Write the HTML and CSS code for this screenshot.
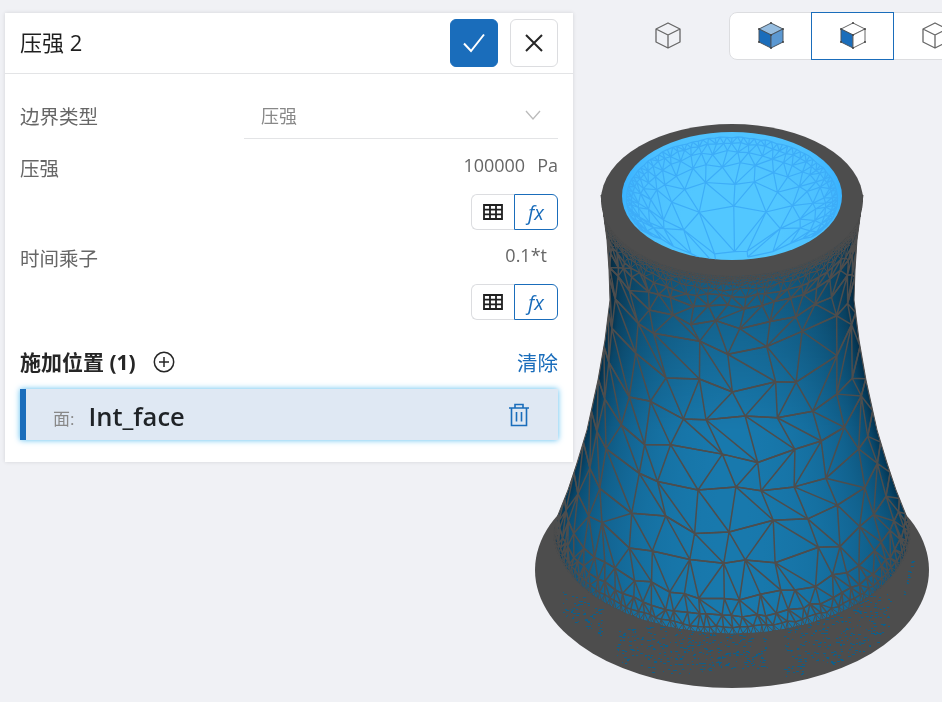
FILE: index.html
```html
<!DOCTYPE html>
<html lang="zh-CN">
<head>
    <meta charset="UTF-8">
    <meta name="viewport" content="width=device-width, initial-scale=1.0">
    <title>压强 2</title>
    <link rel="stylesheet" href="styles.css">
</head>
<body>
    <div class="stage">
        <canvas id="viewport" class="viewport" width="942" height="702"></canvas>

        <div class="view-tools">
            <svg class="cube cube-solo" viewBox="0 0 26 28"><path d="M13 1 25 7V20L13 26 1 20V7ZM1 7 13 13 25 7M13 13V26"/></svg>
            <div class="view-group">
                <button class="view-btn"><svg class="cube cube-dark" viewBox="0 0 26 28"><path class="f-top" d="M13 1 25 7 13 13 1 7Z"/><path class="f-left" d="M1 7 13 13V26L1 20Z"/><path class="f-right" d="M25 7 13 13V26L25 20Z"/><path class="dots" d="M13 1h.01M25 7h.01M25 20h.01M13 26h.01M1 20h.01M1 7h.01M13 13h.01"/></svg></button>
                <button class="view-btn active"><svg class="cube cube-dark" viewBox="0 0 26 28"><path class="f-none" d="M13 1 25 7 13 13 1 7Z"/><path class="f-left" d="M1 7 13 13V26L1 20Z"/><path class="f-none" d="M25 7 13 13V26L25 20Z"/><path class="dots" d="M13 1h.01M25 7h.01M25 20h.01M13 26h.01M1 20h.01M1 7h.01M13 13h.01"/></svg></button>
                <button class="view-btn"><svg class="cube" viewBox="0 0 26 28"><path d="M13 1 25 7V20L13 26 1 20V7ZM1 7 13 13 25 7M13 13V26"/></svg></button>
            </div>
        </div>

        <div class="panel">
            <div class="panel-head">
                <span class="panel-title">压强 2</span>
                <button class="square-btn primary"><svg viewBox="0 0 24 24" width="24" height="24"><path d="M2 12.5 9 20 22 3.500"/></svg></button>
                <button class="square-btn"><svg viewBox="0 0 24 24" width="24" height="24"><path d="M4 4 20 20M20 4 4 20"/></svg></button>
            </div>
            <div class="panel-body">
                <div class="select-row">
                    <label class="field-label">边界类型</label>
                    <div class="select">
                        <span class="select-text">压强</span>
                        <svg viewBox="0 0 16 10" width="16" height="10"><path d="M1 1 8 9 15 1"/></svg>
                    </div>
                </div>

                <div class="field">
                    <label class="field-label">压强</label>
                    <div class="field-value">100000<span class="unit">Pa</span></div>
                </div>
                <div class="toggle-row">
                    <div class="toggle">
                        <button class="toggle-btn"><svg viewBox="0 0 20 16" width="20" height="16"><path d="M1 1H19V15H1ZM1 5.700H19M1 10.300H19M7 1V15M13 1V15"/></svg></button>
                        <button class="toggle-btn on">fx</button>
                    </div>
                </div>

                <div class="field field-next">
                    <label class="field-label">时间乘子</label>
                    <div class="field-value short">0.1*t</div>
                </div>
                <div class="toggle-row">
                    <div class="toggle">
                        <button class="toggle-btn"><svg viewBox="0 0 20 16" width="20" height="16"><path d="M1 1H19V15H1ZM1 5.700H19M1 10.300H19M7 1V15M13 1V15"/></svg></button>
                        <button class="toggle-btn on">fx</button>
                    </div>
                </div>

                <div class="section-head">
                    <span class="section-title">施加位置 (1)</span>
                    <svg class="add-icon" viewBox="0 0 22 22" width="22" height="22"><circle cx="11" cy="11" r="9.700"/><path d="M11 6V16M6 11H16"/></svg>
                    <a class="clear-link">清除</a>
                </div>
                <div class="pick-item">
                    <span class="pick-type">面:</span>
                    <span class="pick-name">Int_face</span>
                    <svg class="trash-icon" viewBox="0 0 22 24" width="22" height="24"><path d="M1 5H21M7 5V1.500H15V5M3.500 5V22.500H18.500V5M8.500 9V18.500M13.500 9V18.500"/></svg>
                </div>
            </div>
        </div>
    </div>
    <script src="mesh.js"></script>
</body>
</html>
```

FILE: styles.css
```css
body {
    margin: 0;
    overflow: hidden;
    font-family: "Open Sans", "Noto Sans CJK SC", sans-serif;
    color: #333;
}

button {
    font-family: inherit;
    padding: 0;
    cursor: pointer;
}

.stage {
    position: relative;
    width: 942px;
    height: 702px;
    overflow: hidden;
    background-color: #f0f1f5;
    padding: 13px 0 0 5px;
    box-sizing: border-box;
}

/* 3D view sits behind everything */
.viewport {
    position: absolute;
    top: 0;
    left: 0;
}

/* Tools float over the 3D view */
.view-tools {
    position: absolute;
    top: 12px;
    left: 655px;
    display: flex;
    align-items: center;
    width: 340px;
}

.cube {
    width: 26px;
    height: 28px;
    display: block;
}

.cube path {
    fill: none;
    stroke: #666;
    stroke-width: 1.3;
    stroke-linejoin: round;
}

.cube-solo {
    margin-right: 48px;
}

.cube-dark path {
    stroke: #4a5560;
    stroke-width: 1;
}

.cube-dark .f-top { fill: #96bde0; }
.cube-dark .f-left { fill: #1a6dbb; }
.cube-dark .f-right { fill: #5b98d2; }
.cube-dark .f-none { fill: #fff; stroke: #666; }

.cube-dark .dots {
    stroke: #444;
    stroke-width: 2;
    stroke-linecap: round;
}

.view-group {
    display: flex;
    height: 48px;
    background-color: #fff;
    border: 1px solid #dcdde0;
    border-radius: 8px;
    box-sizing: border-box;
}

.view-btn {
    width: 81px;
    height: 46px;
    border: none;
    background: none;
    display: flex;
    align-items: center;
    justify-content: center;
}

.view-btn.active {
    height: 48px;
    width: 83px;
    margin: -1px 0;
    border: 1px solid #1a6dbb;
}

.panel {
    position: relative;
    width: 568px;
    background-color: #fff;
    box-shadow: 0 0 4px rgba(0, 0, 0, 0.12);
}

.panel-head {
    display: flex;
    align-items: center;
    gap: 12px;
    height: 60px;
    padding: 0 15px;
    border-bottom: 1px solid #e3e4e6;
}

.panel-title {
    flex: 1;
    font-size: 22px;
    color: #1f1f1f;
    margin-bottom: 4px;
}

.square-btn {
    width: 48px;
    height: 48px;
    background-color: #fff;
    border: 1px solid #dcdde0;
    border-radius: 6px;
    display: flex;
    align-items: center;
    justify-content: center;
}

.square-btn path {
    fill: none;
    stroke: #262626;
    stroke-width: 2;
}

.square-btn.primary {
    background-color: #1a6dbb;
    border-color: #1a6dbb;
}

.square-btn.primary path {
    stroke: #fff;
}

.panel-body {
    padding: 21px 15px 22px;
}

.field-label {
    font-size: 19.500px;
    line-height: 36px;
    color: #666;
}

.select-row {
    display: flex;
    height: 44px;
}

.select-row .field-label {
    width: 224px;
    line-height: 44px;
}

.select {
    flex: 1;
    display: flex;
    align-items: center;
    justify-content: space-between;
    padding: 0 17px 3px;
    border-bottom: 1px solid #e3e4e6;
    font-size: 18px;
    color: #888;
}

.select-text {
    margin-bottom: 1px;
}

.select svg path {
    fill: none;
    stroke: #bbb;
    stroke-width: 1.3;
}

.field {
    display: flex;
    justify-content: space-between;
    height: 34px;
    margin-top: 12px;
}

.field-next {
    margin-top: 11px;
}

.field-value {
    font-size: 18px;
    line-height: 28px;
    color: #666;
}

.field-value.short {
    margin-right: 11px;
}

.unit {
    margin-left: 12px;
}

.toggle-row {
    display: flex;
    justify-content: flex-end;
    margin-top: 9px;
}

.toggle {
    display: flex;
    height: 36px;
}

.toggle-btn {
    width: 43px;
    height: 36px;
    background-color: #fff;
    border: 1px solid #dcdde0;
    border-right: none;
    border-radius: 6px 0 0 6px;
    display: flex;
    align-items: center;
    justify-content: center;
}

.toggle-btn path {
    fill: none;
    stroke: #1f1f1f;
    stroke-width: 1.8;
}

.toggle-btn.on {
    width: 44px;
    border: 1px solid #1a6dbb;
    border-radius: 0 6px 6px 0;
    font-size: 20px;
    font-style: italic;
    color: #1a6dbb;
}

.section-head {
    display: flex;
    align-items: center;
    height: 28px;
    margin-top: 28px;
}

.section-title {
    font-size: 21px;
    font-weight: 700;
    color: #262626;
    margin-bottom: 3px;
}

.add-icon {
    margin-left: 17px;
}

.add-icon circle,
.add-icon path {
    fill: none;
    stroke: #262626;
    stroke-width: 1.5;
}

.clear-link {
    margin-left: auto;
    font-size: 20.500px;
    color: #1a6dbb;
}

.pick-item {
    display: flex;
    align-items: center;
    height: 51px;
    margin-top: 13px;
    padding: 0 28px 0 27px;
    background-color: #dfe8f3;
    border-left: 6px solid #1a6dbb;
    box-shadow: 0 0 6px #58bdf0;
}

.pick-type {
    font-size: 17px;
    color: #888;
    margin: 5px 14px 0 0;
}

.pick-name {
    flex: 1;
    font-size: 25.500px;
    font-weight: 600;
    color: #1f2327;
    margin-top: 2px;
}

.trash-icon path {
    fill: none;
    stroke: #1a6dbb;
    stroke-width: 1.6;
}
```

FILE: mesh.js
```js
// Draws the meshed tower in the 3D view
const ctx = document.getElementById('viewport').getContext('2d');
const CX = 732;
const DARK = '#4d4d4d';

// Seeded so the mesh is the same on every load
let seed = 7;
function rnd() {
    seed = (seed * 16807) % 2147483647;
    return seed / 2147483647;
}
function jit(amount) {
    return (rnd() - 0.5) * 2 * amount;
}

// y -> half width of the tower outline
const profile = [[195, 131], [210, 129], [240, 125], [270, 123], [300, 122], [340, 127], [380, 134],
    [430, 145], [463, 155], [490, 164], [515, 174], [530, 179], [640, 179]];

function halfWidth(y) {
    for (let i = 1; i < profile.length; i++) {
        if (y <= profile[i][0]) {
            const a = profile[i - 1], b = profile[i];
            return a[1] + (b[1] - a[1]) * Math.max(0, y - a[0]) / (b[0] - a[0]);
        }
    }
    return 179;
}

// Ring whose front edge is at y = front: returns its centre and radii
function ringAt(front) {
    let yc = front - 80;
    for (let i = 0; i < 8; i++) {
        yc = front - 0.59 * halfWidth(yc);
    }
    const rx = halfWidth(yc);
    return { yc: yc, rx: rx, ry: 0.59 * rx };
}

function lerp(a, b, t) {
    return a + (b - a) * t;
}

// Joins two rows of points with triangles
function stitch(ctx, a, b) {
    let i = 0, j = 0;
    ctx.moveTo(a[0].x, a[0].y);
    ctx.lineTo(b[0].x, b[0].y);
    while (i < a.length - 1 || j < b.length - 1) {
        const ta = (i + 1) / (a.length - 1 || 1), tb = (j + 1) / (b.length - 1 || 1);
        if (j >= b.length - 1 || (i < a.length - 1 && ta < tb)) {
            i++;
            ctx.moveTo(a[i - 1].x, a[i - 1].y);
            ctx.lineTo(a[i].x, a[i].y);
        } else {
            j++;
            ctx.moveTo(b[j - 1].x, b[j - 1].y);
            ctx.lineTo(b[j].x, b[j].y);
        }
        ctx.moveTo(a[i].x, a[i].y);
        ctx.lineTo(b[j].x, b[j].y);
    }
}

function drawBase() {
    ctx.fillStyle = DARK;
    ctx.beginPath();
    ctx.ellipse(CX, 570, 197, 118, 0, 0, Math.PI * 2);
    ctx.fill();

    // Blue specks where the flange mesh is very fine, kept well inside the flange
    const patches = [[563, 597, 40, 30, 70], [617, 623, 150, 50, 420], [783, 607, 107, 56, 300], [903, 570, 10, 12, 14]];
    ctx.fillStyle = '#0d5f8a';
    patches.forEach(function (p) {
        for (let i = 0; i < p[4]; i++) {
            const x = p[0] + rnd() * p[2];
            const t = (x - p[0]) / p[2];
            let y = p[1] + rnd() * p[3];
            if (p[0] > 780) y -= (t - 0.5) * 38;
            if (p[0] < 600) y += (t - 0.5) * 25;
            if (p[0] === 617) y += (0.5 - t) * 12;
            const dx = (x - CX) / 197, dy = (y - 570) / 118;
            if (dx * dx + dy * dy > 0.92) continue;
            ctx.fillRect(Math.round(x), Math.round(y), 1 + Math.round(rnd() * 2), 1);
        }
    });
}

function bodyPath() {
    ctx.beginPath();
    ctx.moveTo(CX - halfWidth(195), 195);
    for (let y = 195; y <= 530; y += 5) ctx.lineTo(CX - halfWidth(y), y);
    ctx.ellipse(CX, 530, 179, 104, 0, Math.PI, 0, true);
    for (let y = 530; y >= 195; y -= 5) ctx.lineTo(CX + halfWidth(y), y);
    ctx.closePath();
}

function drawBody() {
    ctx.save();
    bodyPath();
    ctx.clip();
    // One gradient per pixel row, darker towards the outline and the top
    for (let y = 195; y < 640; y++) {
        const hw = halfWidth(y);
        const v = Math.min(1, 0.76 + Math.max(0, y - 280) * 0.0016);
        const g = ctx.createLinearGradient(CX - hw, 0, CX + hw, 0);
        for (let k = 0; k <= 24; k++) {
            const t = k / 24;
            const d = Math.abs(t * 2 - 1);
            const n = Math.min(1, Math.sqrt(1 - d * d));
            const r = lerp(3, 24, n) * v, gr = lerp(52, 121, n) * v, b = lerp(82, 173, n) * v;
            g.addColorStop(t, 'rgb(' + Math.round(r) + ',' + Math.round(gr) + ',' + Math.round(b) + ')');
        }
        ctx.fillStyle = g;
        ctx.fillRect(CX - hw, y, hw * 2, 1);
    }

    // Build the rows of vertices from under the rim down to the flange
    const rows = [];
    let front = 268;
    while (front < 640) {
        const s = Math.max(2.2, Math.min(2.2 + Math.max(0, front - 279) * 0.5, 36, 3 + (637 - front) * 0.4));
        const ring = ringAt(front);
        const n = Math.max(6, Math.round(Math.PI * ring.rx / (s * 1.05)));
        const row = [];
        for (let i = 0; i <= n; i++) {
            let th = -Math.PI / 2 + Math.PI * i / n;
            if (i > 0 && i < n) th += jit(0.28 * Math.PI / n);
            row.push({
                x: CX + ring.rx * Math.sin(th),
                y: ring.yc + ring.ry * Math.cos(th) + (i > 0 && i < n ? jit(0.2 * s) : 0)
            });
        }
        row.size = s;
        rows.push(row);
        front += s;
    }

    // Thinner strokes in the fine bands so they don't fill in completely
    ctx.strokeStyle = DARK;
    for (let r = 0; r < rows.length - 1; r++) {
        ctx.lineWidth = rows[r].size < 9 ? 1 : 1.5;
        ctx.beginPath();
        stitch(ctx, rows[r], rows[r + 1]);
        ctx.stroke();
    }
    ctx.restore();

    bodyPath();
    ctx.strokeStyle = DARK;
    ctx.lineWidth = 1;
    ctx.stroke();
}

function drawRim() {
    ctx.fillStyle = DARK;
    ctx.beginPath();
    ctx.ellipse(CX, 200, 131, 76, 0, 0, Math.PI * 2);
    ctx.fill();
}

function drawInner() {
    ctx.save();
    ctx.beginPath();
    ctx.ellipse(CX, 196, 110, 64, 0, 0, Math.PI * 2);
    ctx.clip();

    const g = ctx.createRadialGradient(CX, 225, 50, CX, 205, 115);
    g.addColorStop(0, '#52c7ff');
    g.addColorStop(0.7, '#4cc0ff');
    g.addColorStop(1, '#33aeff');
    ctx.fillStyle = g;
    ctx.fillRect(CX - 115, 125, 230, 145);

    // Concentric rows that tighten towards the rim
    const rows = [];
    let f = 0.96;
    while (f > 0.1) {
        const s = 2.8 + (1 - f) * 46;
        const rx = 110 * f, ry = 64 * f, cy = 196 + (1 - f) * 72;
        const span = Math.PI * 0.68;
        const n = Math.max(4, Math.round(span * 2 * rx * 0.8 / s));
        const row = [];
        for (let i = 0; i <= n; i++) {
            let th = -span + 2 * span * i / n;
            if (i > 0 && i < n) th += jit(0.28 * span / n);
            row.push({
                x: CX + rx * Math.sin(th),
                y: cy - ry * Math.cos(th) + jit(0.2 * s)
            });
        }
        rows.push(row);
        f -= s / 105;
    }
    ctx.strokeStyle = '#3dadf8';
    ctx.lineWidth = 1.2;
    ctx.beginPath();
    for (let r = 0; r < rows.length - 1; r++) stitch(ctx, rows[r], rows[r + 1]);
    ctx.stroke();
    ctx.restore();
}

drawBase();
drawBody();
drawRim();
drawInner();
```
